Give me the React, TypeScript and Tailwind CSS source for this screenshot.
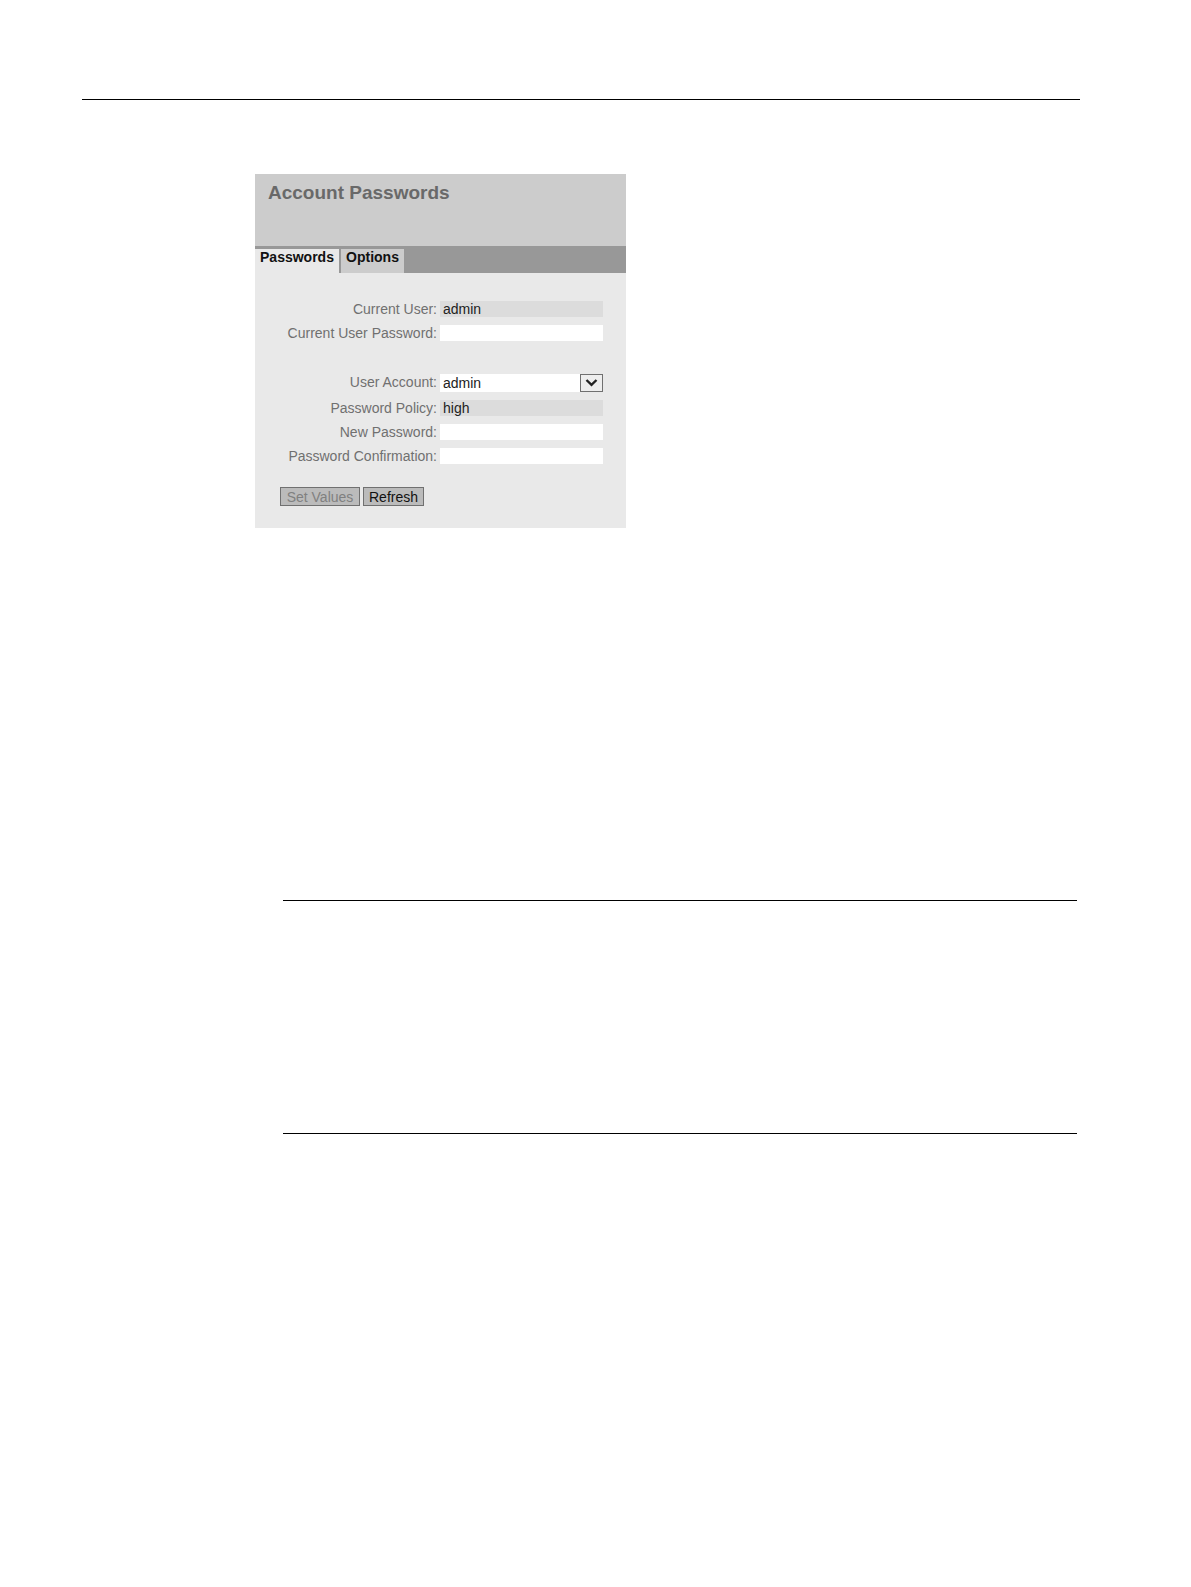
import { useState } from "react";
import type { ReactNode } from "react";

const field = "block h-4 w-full px-[3px] leading-4 outline-none";

function Row({ id, label, children }: { id: string; label: string; children: ReactNode }) {
  return (
    <div className="flex min-h-6 items-center gap-[3px]">
      <label htmlFor={id} className="w-[182px] shrink-0 text-right leading-6 text-[#707070]">
        {label}
      </label>
      <div className="min-w-0 flex-1">{children}</div>
    </div>
  );
}

function AccountPanel() {
  const [tab, setTab] = useState("passwords");
  return (
    <section className="w-full max-w-[371px] bg-[#e9e9e9] pb-[22px]">
      <header className="h-[72px] bg-[#cccccc] px-[13px] pt-[5px]">
        <h1 className="text-[19px] leading-7 font-bold text-[#696969]">Account Passwords</h1>
      </header>
      <nav role="tablist" className="flex h-[27px] gap-0.5 bg-[#989898] pt-[3px]">
        <button
          role="tab"
          aria-selected={tab === "passwords"}
          onClick={() => setTab("passwords")}
          className="h-6 w-[84px] bg-[#e9e9e9] pb-2 text-center leading-4 font-bold text-[#111111]"
        >
          Passwords
        </button>
        <button
          role="tab"
          aria-selected={tab === "options"}
          onClick={() => setTab("options")}
          className="h-6 w-[63px] bg-[#cccccc] pb-2 text-center leading-4 font-bold text-[#111111]"
        >
          Options
        </button>
      </nav>
      <form className="pt-6 pr-[23px]" onSubmit={(e) => e.preventDefault()}>
        <Row id="current-user" label="Current User:">
          <input id="current-user" readOnly value="admin" className={`${field} bg-[#dcdcdc]`} />
        </Row>
        <Row id="current-password" label="Current User Password:">
          <input id="current-password" type="password" className={`${field} bg-white`} />
        </Row>
        <div className="mt-[25px]">
          <Row id="user-account" label="User Account:">
            <div className="pt-0.5">
              <div className="relative">
                <select
                  id="user-account"
                  defaultValue="admin"
                  className="block h-[18px] w-full appearance-none bg-white px-[3px] leading-[18px] outline-none"
                >
                  <option value="admin">admin</option>
                </select>
                <span className="pointer-events-none absolute top-0 right-0 flex h-[18px] w-[23px] items-center justify-center border border-[#707070] bg-[#eeeeee]">
                  <svg width="13" height="8" viewBox="0 0 13 8" fill="none" stroke="#222222" strokeWidth="2.4" aria-hidden="true">
                    <path d="M1.5 1 6.5 5.8 11.5 1" />
                  </svg>
                </span>
              </div>
            </div>
          </Row>
        </div>
        <div className="mt-0.5">
          <Row id="policy" label="Password Policy:">
            <input id="policy" readOnly value="high" className={`${field} bg-[#dcdcdc]`} />
          </Row>
          <Row id="new-password" label="New Password:">
            <input id="new-password" type="password" className={`${field} bg-white`} />
          </Row>
          <Row id="confirm-password" label="Password Confirmation:">
            <input id="confirm-password" type="password" className={`${field} bg-white`} />
          </Row>
        </div>
        <div className="mt-[19px] ml-[25px] flex gap-[3px]">
          <button disabled className="h-[19px] w-20 border border-[#707070] bg-[#bbbbbb] text-center leading-4 text-[#808080]">
            Set Values
          </button>
          <button className="h-[19px] w-[61px] border border-[#707070] bg-[#bbbbbb] text-center leading-4 text-[#111111]">
            Refresh
          </button>
        </div>
      </form>
    </section>
  );
}

export default function App() {
  return (
    <main className="min-h-screen bg-white pt-[99px] font-['Liberation_Sans',Arial,sans-serif] text-[14px] text-[#222222]">
      <hr className="mr-[111px] ml-[82px] border-t border-black" />
      <div className="mt-[74px] pl-[255px]">
        <AccountPanel />
      </div>
      <hr className="mt-[372px] mr-[114px] ml-[283px] border-t border-black" />
      <hr className="mt-[232px] mr-[114px] ml-[283px] border-t border-black" />
    </main>
  );
}
